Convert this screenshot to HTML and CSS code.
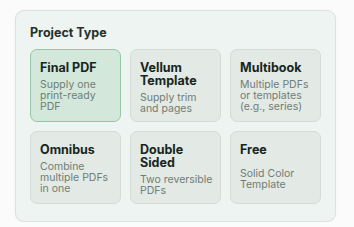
FILE: index.html
```html
<!DOCTYPE html>
<html>
<head>
  <meta charset="utf-8">
  <title>Project Type</title>
  <link rel="stylesheet" href="styles.css">
</head>
<body>
  <div class="panel">
    <h2 class="panelTitle">Project Type</h2>
    <div class="typeGrid">
      <div class="typeCard selected">
        <div class="typeName">Final PDF</div>
        <div class="typeDesc">Supply one print-ready PDF</div>
      </div>
      <div class="typeCard">
        <div class="typeName">Vellum Template</div>
        <div class="typeDesc">Supply trim and pages</div>
      </div>
      <div class="typeCard">
        <div class="typeName">Multibook</div>
        <div class="typeDesc">Multiple PDFs or templates (e.g., series)</div>
      </div>
      <div class="typeCard">
        <div class="typeName">Omnibus</div>
        <div class="typeDesc">Combine multiple PDFs in one</div>
      </div>
      <div class="typeCard">
        <div class="typeName">Double Sided</div>
        <div class="typeDesc">Two reversible PDFs</div>
      </div>
      <div class="typeCard">
        <div class="typeName">Free</div>
        <div class="typeDesc spaced">Solid Color Template</div>
      </div>
    </div>
  </div>
</body>
</html>
```

FILE: styles.css
```css
body {
  margin: 0;
  background-color: #fafbfa;
  font-family: Inter, "Noto Sans", sans-serif;
  color: #1b2a22;
}

.panel {
  box-sizing: border-box;
  width: 321px;
  margin: 10px 0 0 15px;
  padding: 14px 14px 17px 14px;
  background-color: #eef4f1;
  border: 1px solid #d9e2dd;
  border-radius: 9px;
  box-shadow: 0 1px 3px rgba(0, 0, 0, 0.04);
}

.panelTitle {
  margin: 0;
  font-size: 12.5px;
  line-height: 16px;
  font-weight: 700;
  color: #243229;
}

.typeGrid {
  display: grid;
  grid-template-columns: repeat(3, 91px);
  column-gap: 9px;
  row-gap: 9px;
  margin-top: 8px;
}

.typeCard {
  box-sizing: border-box;
  padding: 11px 4px 7px 9px;
  background-color: #e3e9e5;
  border: 1px solid #d4dcd7;
  border-radius: 7px;
  min-height: 73px;
}

.typeCard.selected {
  background-color: #d3e8db;
  border-color: #94c7a9;
}

.typeName {
  font-size: 12.5px;
  line-height: 13px;
  font-weight: 700;
  color: #17261d;
}

.typeDesc {
  margin-top: 5px;
  font-size: 10.5px;
  line-height: 11px;
  color: #6f7d75;
}

.typeDesc.spaced {
  margin-top: 12px;
}
```
